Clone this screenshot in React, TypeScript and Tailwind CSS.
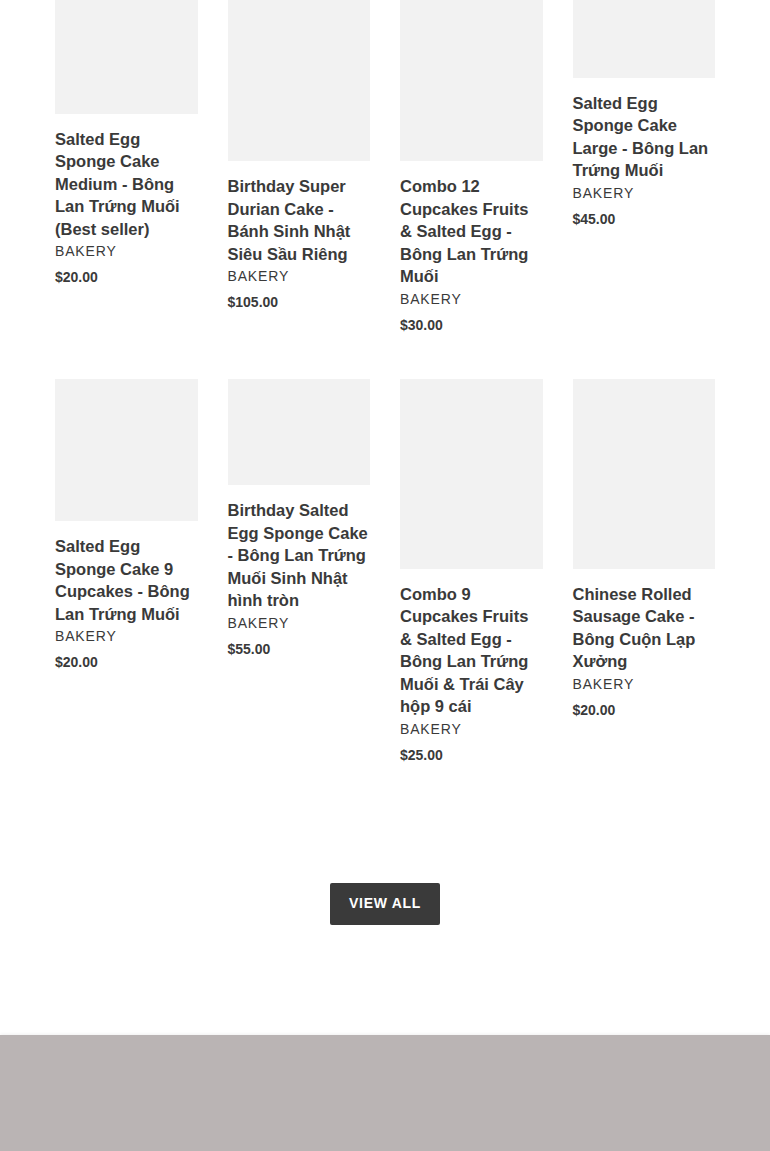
import React from "react";

type Shape = "square" | "tall" | "wide";
type Product = { title: string; price: string; shape: Shape };

const products: Product[] = [
  { title: "Salted Egg Sponge Cake Medium - Bông Lan Trứng Muối (Best seller)", price: "$20.00", shape: "square" },
  { title: "Birthday Super Durian Cake - Bánh Sinh Nhật Siêu Sầu Riêng", price: "$105.00", shape: "tall" },
  { title: "Combo 12 Cupcakes Fruits & Salted Egg - Bông Lan Trứng Muối", price: "$30.00", shape: "tall" },
  { title: "Salted Egg Sponge Cake Large - Bông Lan Trứng Muối", price: "$45.00", shape: "wide" },
  { title: "Salted Egg Sponge Cake 9 Cupcakes - Bông Lan Trứng Muối", price: "$20.00", shape: "square" },
  { title: "Birthday Salted Egg Sponge Cake - Bông Lan Trứng Muối Sinh Nhật hình tròn", price: "$55.00", shape: "wide" },
  { title: "Combo 9 Cupcakes Fruits & Salted Egg - Bông Lan Trứng Muối & Trái Cây hộp 9 cái", price: "$25.00", shape: "tall" },
  { title: "Chinese Rolled Sausage Cake - Bông Cuộn Lạp Xưởng", price: "$20.00", shape: "tall" },
];

const shapeClass: Record<Shape, string> = {
  square: "aspect-square",
  tall: "aspect-[3/4]",
  wide: "aspect-[4/3]",
};

function Card({ p }: { p: Product }) {
  return (
    <a href="#" className="block text-[#3a3a3a]">
      <div className={`w-full bg-[#f2f2f2] ${shapeClass[p.shape]}`} />
      <div className="mt-[14px] text-[16.5px] leading-[22.5px] font-bold">{p.title}</div>
      <div className="text-[14px] leading-[22px] uppercase tracking-[0.84px]">Bakery</div>
      <div className="mt-[5px] text-[14px] leading-[21px] font-bold">{p.price}</div>
    </a>
  );
}

export default function App() {
  return (
    <div className="min-h-[1151px] bg-white font-['Liberation_Sans',Arial,Helvetica,sans-serif] overflow-hidden">
      <div className="px-[55px] mt-[-29px]">
        <div className="grid grid-cols-4 gap-x-[30px] gap-y-[43px] items-start">
          {products.map((p, i) => (
            <Card key={i} p={p} />
          ))}
        </div>
        <div className="flex justify-center mt-[117px]">
          <a
            href="#"
            className="flex items-center justify-center w-[110px] h-[42px] bg-[#3a3a3a] text-white text-[14px] font-bold uppercase tracking-[0.7px] rounded-[2px]"
          >
            View all
          </a>
        </div>
      </div>
      <footer className="mt-[110px] h-[200px] bg-[#bab4b4] shadow-[0_-1px_3px_rgba(0,0,0,0.06)]" />
    </div>
  );
}
